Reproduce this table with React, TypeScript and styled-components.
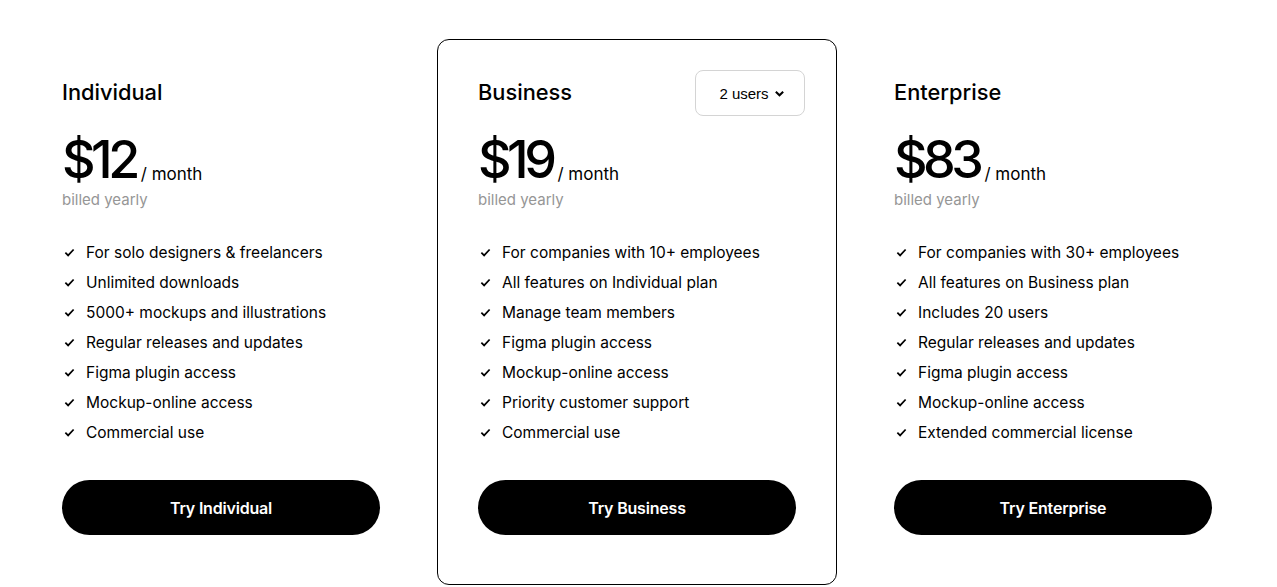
import React from "react";
import styled, { createGlobalStyle } from "styled-components";

const Global = createGlobalStyle`
  html, body { margin: 0; padding: 0; background: #fff; }
  body { font-family: "Inter", "Noto Sans", sans-serif; color: #000; }
  * { box-sizing: border-box; }
`;

const Page = styled.div`
  display: grid;
  grid-template-columns: repeat(3, 400px);
  gap: 16px;
  padding: 39px 0 0 21px;
`;

const Card = styled.div<{ $featured?: boolean }>`
  border: 1px solid ${(p) => (p.$featured ? "#000" : "transparent")};
  border-radius: 12px;
  padding: 30px 40px 49px;
  display: flex;
  flex-direction: column;
`;

const Header = styled.div`
  display: flex;
  align-items: center;
  justify-content: space-between;
  height: 46px;
`;

const Title = styled.h2`
  margin: 0 0 2px;
  font-size: 21.8px;
  font-weight: 500;
  letter-spacing: 0px;
`;

const Select = styled.button`
  width: 110px;
  height: 46px;
  margin-right: -9px;
  border: 1px solid #d4d4d4;
  border-radius: 8px;
  background: #fff;
  font-family: "Liberation Sans", Arial, sans-serif;
  font-size: 15px;
  color: #000;
  display: flex;
  align-items: center;
  justify-content: center;
  gap: 5px;
  padding: 0 0 0 4px;
`;

const PriceRow = styled.div`
  display: flex;
  align-items: flex-end;
  margin-top: 15px;
  height: 58px;
`;

const Amount = styled.span`
  font-size: 52px;
  font-weight: 500;
  letter-spacing: -4.5px;
  line-height: 58px;
`;

const Per = styled.span`
  font-size: 17px;
  line-height: 17px;
  margin: 0 0 6px 5px;
`;

const Billed = styled.div`
  font-size: 15px;
  color: #969696;
  line-height: 22px;
`;

const Features = styled.ul`
  list-style: none;
  margin: 26px 0 0;
  padding: 0;
  display: flex;
  flex-direction: column;
`;

const Feature = styled.li`
  display: flex;
  align-items: center;
  gap: 11px;
  height: 30px;
  font-size: 15.5px;
`;

const Check = styled.svg`
  width: 11px;
  height: 11px;
  flex: none;
  margin-left: 2px;
`;

const Cta = styled.button`
  margin-top: 33px;
  height: 55px;
  width: 100%;
  border: none;
  border-radius: 28px;
  background: #000;
  color: #fff;
  font-family: inherit;
  font-size: 16px;
  font-weight: 600;
  letter-spacing: -0.2px;
`;

const plans = [
  {
    name: "Individual",
    price: "$12",
    features: [
      "For solo designers & freelancers",
      "Unlimited downloads",
      "5000+ mockups and illustrations",
      "Regular releases and updates",
      "Figma plugin access",
      "Mockup-online access",
      "Commercial use",
    ],
  },
  {
    name: "Business",
    price: "$19",
    featured: true,
    features: [
      "For companies with 10+ employees",
      "All features on Individual plan",
      "Manage team members",
      "Figma plugin access",
      "Mockup-online access",
      "Priority customer support",
      "Commercial use",
    ],
  },
  {
    name: "Enterprise",
    price: "$83",
    features: [
      "For companies with 30+ employees",
      "All features on Business plan",
      "Includes 20 users",
      "Regular releases and updates",
      "Figma plugin access",
      "Mockup-online access",
      "Extended commercial license",
    ],
  },
];

export default function App() {
  return (
    <>
      <Global />
      <Page>
        {plans.map((p) => (
          <Card key={p.name} $featured={p.featured}>
            <Header>
              <Title>{p.name}</Title>
              {p.featured && (
                <Select>
                  2 users
                  <svg width="11" height="11" viewBox="0 0 12 12">
                    <path d="M2 4l4 4 4-4" fill="none" stroke="#000" strokeWidth="2.2" />
                  </svg>
                </Select>
              )}
            </Header>
            <PriceRow>
              <Amount>{p.price}</Amount>
              <Per>/ month</Per>
            </PriceRow>
            <Billed>billed yearly</Billed>
            <Features>
              {p.features.map((f) => (
                <Feature key={f}>
                  <Check viewBox="0 0 12 12">
                    <path d="M1.5 6.2l3 3 6-6.5" fill="none" stroke="#000" strokeWidth="1.9" />
                  </Check>
                  {f}
                </Feature>
              ))}
            </Features>
            <Cta>Try {p.name}</Cta>
          </Card>
        ))}
      </Page>
    </>
  );
}
